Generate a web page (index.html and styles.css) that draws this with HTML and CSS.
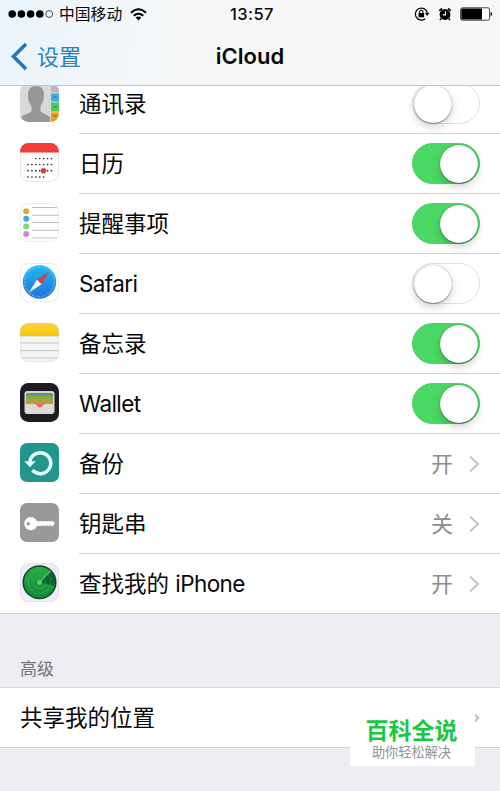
FILE: index.html
```html
<!DOCTYPE html>
<html lang="zh-CN">
<head>
<meta charset="utf-8">
<title>iCloud</title>
<link rel="stylesheet" href="styles.css">
</head>
<body>
<header class="header">
  <div class="status">
    <div class="carrier">
      <svg width="46" height="10" viewBox="0 0 46 10"><circle cx="4.2" cy="5" r="3.8"/><circle cx="13.4" cy="5" r="3.8"/><circle cx="22.6" cy="5" r="3.8"/><circle cx="31.8" cy="5" r="3.8"/><circle cx="41.2" cy="5" r="3.4" fill="none" stroke="#222" stroke-width=".8"/></svg>
      <span>中国移动</span>
      <svg class="wifi" width="17" height="13" viewBox="0 0 17 13"><g fill="none" stroke="#000" stroke-width="2"><path d="M1 4.8Q8.500-2.200 16 4.800"/><path d="M3.700 7.800Q8.500 3.600 13.300 7.800"/></g><path d="M5.600 9.600Q8.500 7.300 11.400 9.600L8.500 12.500Z"/></svg>
    </div>
    <span class="clock">13:57</span>
    <div class="indicators">
      <svg width="16" height="14" viewBox="0 0 16 14"><path d="M13.200 5.500A6 6 0 1 0 11.200 11.700" fill="none" stroke="#000" stroke-width="1.200"/><path d="M10.900 5.800h4.500l-2.200 3.200z"/><path d="M4.500 6h5.600v4.300H4.500z"/><path d="M5.600 6.300V5a1.700 1.700 0 0 1 3.400 0v1.300" fill="none" stroke="#000" stroke-width="1.100"/></svg>
      <svg width="14" height="14" viewBox="0 0 14 14"><circle cx="7" cy="7.500" r="5.400"/><path d="M1.300 3.800 4 1.500M10 1.500l2.700 2.300M3.200 11.700 2 13M10.800 11.700 12 13" stroke="#000" stroke-width="1.700"/><path d="M7.500 4.300v3.600H4.800" fill="none" stroke="#fff" stroke-width="1.100"/></svg>
      <svg width="33" height="14" viewBox="0 0 33 14"><rect x=".6" y=".8" width="29" height="12.400" rx="2" fill="#fff" stroke="#444" stroke-width="1"/><rect x="1.300" y="1.500" width="20.700" height="11"/><path d="M30.700 4.500q2.800 2.500 0 5z"/></svg>
    </div>
  </div>
  <nav class="nav">
    <a class="back"><svg width="18" height="29" viewBox="0 0 18 29"><path d="M16 2 3.500 14.500 16 27" fill="none" stroke="#1b7bc9" stroke-width="3.600"/></svg><span>设置</span></a>
    <h1 class="title">iCloud</h1>
  </nav>
</header>
<main>
  <ul class="list">
    <li class="row">
      <svg class="icon" viewBox="0 0 39 39"><defs><clipPath id="app"><rect width="39" height="39" rx="8.500"/></clipPath></defs><g clip-path="url(#app)"><path fill="#d9d9d9" d="M0 0h39v39H0z"/><path fill="#969696" d="M16 3c5.500 0 8.500 4 8 10-.3 5-2 8-3.500 10v5c2 3 7 3 9.500 6.500V39H1v-4.500C3.500 31 10 31 11.500 28v-5C9 20 8 17 8 13 7.500 7 10.500 3 16 3z"/><path fill="#b8b8b8" d="M31 0h8v10h-8z"/><path fill="#3eafe7" d="M31 10h8v9h-8z"/><path fill="#4bcd58" d="M31 19h8v10h-8z"/><path fill="#f39b18" d="M31 29h8v10h-8z"/><path d="M31 19h8M31 29h8M31 10h8" stroke="#fff" stroke-width=".7"/><path d="M33 14h4M33 24h4M33 33h4" stroke="#47727f" stroke-width="1"/></g></svg>
      <div class="cell"><span class="label">通讯录</span><i class="switch"></i></div>
    </li>
    <li class="row">
      <svg class="icon" viewBox="0 0 39 39"><rect x=".4" y=".4" width="38.200" height="38.200" rx="8.500" fill="#fff" stroke="#e4dede" stroke-width=".8"/><path clip-path="url(#app)" fill="#f23c39" d="M0 0h39v9.500H0z"/><g fill="none" stroke="#333" stroke-width="1.700" stroke-linecap="round" stroke-dasharray=".01 3.900"><path d="M15.800 15.500h16"/><path d="M8 21.500h24"/><path d="M8 27.700h24"/><path d="M8 34h16"/></g><circle cx="23.500" cy="27.700" r="2.800" fill="#dc4444"/></svg>
      <div class="cell"><span class="label">日历</span><i class="switch on"></i></div>
    </li>
    <li class="row">
      <svg class="icon" viewBox="0 0 39 39"><rect x=".4" y=".4" width="38.200" height="38.200" rx="8.500" fill="#fff" stroke="#e6e6e6" stroke-width=".8"/><path d="M12 4.500h25M12 12.300h27M12 19.500h27M12 27.300h27M12 35h25" stroke="#bfbfc3" stroke-width="1"/><circle cx="6.200" cy="8.300" r="3" fill="#dba83f"/><circle cx="6.200" cy="15.700" r="3" fill="#3eabe0"/><circle cx="6.200" cy="23.500" r="3" fill="#7ddc65"/><circle cx="6.200" cy="31" r="3" fill="#ca85df"/></svg>
      <div class="cell"><span class="label">提醒事项</span><i class="switch on"></i></div>
    </li>
    <li class="row">
      <svg class="icon" viewBox="0 0 39 39"><defs><linearGradient id="sea" x2="0" y2="1"><stop stop-color="#20b9ee"/><stop offset="1" stop-color="#2470dc"/></linearGradient></defs><rect x=".4" y=".4" width="38.200" height="38.200" rx="8.500" fill="#fff" stroke="#e5e5e5" stroke-width=".8"/><circle cx="19.500" cy="19" r="16.700" fill="url(#sea)"/><circle cx="19.500" cy="19" r="14.800" fill="none" stroke="#9bdcf8" stroke-width="1.600" stroke-dasharray=".6 1.700"/><path fill="#d83c48" d="M29 8.500 17 16.800l4.500 4.500z"/><path fill="#fff" d="M9 29.500 17 16.800l4.500 4.500z"/></svg>
      <div class="cell"><span class="label"><span class="latin">Safari</span></span><i class="switch"></i></div>
    </li>
    <li class="row">
      <svg class="icon" viewBox="0 0 39 39"><defs><linearGradient id="gold" x2="0" y2="1"><stop stop-color="#fbd33b"/><stop offset="1" stop-color="#fac60c"/></linearGradient></defs><g clip-path="url(#app)"><path fill="#f4f4f4" d="M0 0h39v39H0z"/><path fill="url(#gold)" d="M0 0h39v12.500H0z"/><path d="M0 12.800h39" stroke="#bda65b" stroke-width=".8"/><path d="M0 20h39M0 27.700h39M0 35h39" stroke="#c3c3c3" stroke-width="1"/></g><rect x=".4" y=".4" width="38.200" height="38.200" rx="8.500" fill="none" stroke="#ccc" stroke-opacity=".5" stroke-width=".8"/></svg>
      <div class="cell"><span class="label">备忘录</span><i class="switch on"></i></div>
    </li>
    <li class="row">
      <svg class="icon" viewBox="0 0 39 39"><rect width="39" height="39" rx="8.500" fill="#1d1d20"/><rect x="4.500" y="8" width="30" height="23" rx="3" fill="#d9d7ce"/><rect x="6" y="10" width="27" height="9" rx="1.500" fill="#598fa8"/><rect x="6" y="12.500" width="27" height="8" rx="1.500" fill="#86ad39"/><rect x="6" y="16" width="27" height="5" fill="#a6a43b"/><path fill="#e08360" d="M6 19.500h27v2H6z"/><path fill="#dedbd3" d="M6 21h9c2 0 2 3.500 5 3.500s3-3.500 5-3.500h8v9H6z"/><path fill="#ed6959" d="M14 20.500h12c-3 0-3 4-6 4s-3-4-6-4z"/></svg>
      <div class="cell"><span class="label"><span class="latin">Wallet</span></span><i class="switch on"></i></div>
    </li>
    <li class="row">
      <svg class="icon" viewBox="0 0 39 39"><rect width="39" height="39" rx="7" fill="#22968b"/><path d="M9.900 18.500A10.500 10.500 0 1 1 12.400 27.200" fill="none" stroke="#e9fffa" stroke-width="3.500"/><path fill="#e9fffa" d="M4.300 18.300h11.400l-5.800 6z"/></svg>
      <div class="cell"><span class="label">备份</span><span class="value">开</span><svg class="chevron" viewBox="0 0 11 18"><path d="m1 1.500 8 7.500-8 7.500"/></svg></div>
    </li>
    <li class="row">
      <svg class="icon" viewBox="0 0 39 39"><rect width="39" height="39" rx="7" fill="#999"/><circle cx="10.800" cy="20.700" r="6.600" fill="#fff"/><path fill="#fff" d="M15 18.300h18.300l1.500 2.300-1.800 2.400h-2l-1-1-1 1h-1.500l-1-1-1 1H24l-1-1-1 1h-7z"/><circle cx="8.300" cy="20.700" r="1.700" fill="#999"/></svg>
      <div class="cell"><span class="label">钥匙串</span><span class="value">关</span><svg class="chevron" viewBox="0 0 11 18"><path d="m1 1.500 8 7.500-8 7.500"/></svg></div>
    </li>
    <li class="row">
      <svg class="icon" viewBox="0 0 39 39"><defs><linearGradient id="radar" x2="0" y2="1"><stop stop-color="#26ad48"/><stop offset="1" stop-color="#15883a"/></linearGradient></defs><rect x=".4" y=".4" width="38.200" height="38.200" rx="8.500" fill="#f0edf4" stroke="#ddd3e4" stroke-width=".8"/><circle cx="19.500" cy="19.200" r="16.300" fill="url(#radar)" stroke="#17452a" stroke-width="1.500"/><path fill="#0e6130" d="m19.500 19.200 11-11.200a15.500 15.500 0 0 1 4 15z"/><g fill="none" stroke="#54cf68" stroke-opacity=".4" stroke-width=".8"><circle cx="19.500" cy="19.200" r="11.500"/><circle cx="19.500" cy="19.200" r="6.500"/></g><path d="m19.500 19.200 11-11.200" stroke="#7ae578" stroke-width="1"/><circle cx="19.500" cy="19.200" r="2.500" fill="#51d164"/></svg>
      <div class="cell"><span class="label">查找我的 <span class="latin">iPhone</span></span><span class="value">开</span><svg class="chevron" viewBox="0 0 11 18"><path d="m1 1.500 8 7.500-8 7.500"/></svg></div>
    </li>
  </ul>
  <h2 class="caption">高级</h2>
  <div class="share"><span class="label">共享我的位置</span><svg class="chevron small" viewBox="0 0 11 18"><path d="m1 1.500 8 7.500-8 7.500"/></svg></div>
</main>
<aside class="badge"><strong>百科全说</strong><span>助你轻松解决</span></aside>
</body>
</html>
```
FILE: styles.css
```css
* { box-sizing: border-box; }
body {
  position: relative;
  height: 791px;
  margin: 0;
  overflow: hidden;
  background: #eeedf4;
  color: #080808;
  font-family: Inter, "Noto Sans CJK SC", sans-serif;
}
svg { display: block; flex: none; }
.header {
  position: relative;
  z-index: 1;
  height: 86px;
  border-bottom: 1px solid #c4c6c8;
  background: linear-gradient(100deg, #e9f4fb 0%, #f4f7f9 28%, #f7f7f8 50%);
}
.status {
  display: grid;
  grid-template-columns: 1fr auto 1fr;
  align-items: center;
  height: 28px;
  padding: 0 7px 0 8px;
}
.carrier { display: flex; align-items: center; font-size: 15.800px; line-height: 20px; }
.carrier span { margin-left: 5px; padding-top: 1px; }
.wifi { margin-left: 8px; }
.clock { padding-left: 3px; font-size: 16.500px; font-weight: 500; letter-spacing: .4px; }
.indicators { display: flex; justify-content: flex-end; align-items: center; gap: 8px; }
.nav {
  display: grid;
  grid-template-columns: 1fr auto 1fr;
  align-items: center;
  height: 56px;
  padding: 0 10px;
}
.back { display: flex; align-items: center; gap: 9px; color: #2981bd; font-size: 22px; line-height: 30px; }
.back span { padding-top: 1px; }
.title { margin: 0; font-size: 22px; font-weight: 600; line-height: 30px; }
.list { margin: -12px 0 0; padding: 0; list-style: none; background: #fff; border-bottom: 1px solid #cfced4; }
.row { display: flex; align-items: center; height: 60px; padding-left: 20px; }
.row:last-child { height: 59px; }
.icon { width: 39px; height: 39px; margin: 0 20px 3px 0; }
.row:last-child .icon { margin-bottom: 2px; }
.cell {
  display: flex;
  flex: 1;
  align-items: center;
  align-self: stretch;
  padding-right: 20px;
  border-bottom: 1px solid #d2d2d4;
}
.row:last-child .cell { border-bottom: 0; }
.label { flex: 1; font-size: 22.500px; line-height: 32px; }
.latin { letter-spacing: -.6px; }
.value { margin-right: 16px; color: #8c8c90; font-size: 22px; line-height: 32px; }
.chevron { width: 11px; height: 18px; fill: none; stroke: #c2c2c7; stroke-width: 2; }
.chevron.small { width: 8px; height: 12px; stroke-width: 3; }
.switch {
  display: flex;
  align-items: center;
  width: 68px;
  height: 41px;
  padding: 1px;
  border: 1px solid #dedee0;
  border-radius: 21px;
  background: #fff;
}
.switch::before {
  content: "";
  width: 38px;
  height: 38px;
  border-radius: 50%;
  background: #fff;
  box-shadow: 0 0 1px rgba(0, 0, 0, .5), 0 1px 1px rgba(0, 0, 0, .3), 0 4px 8px rgba(0, 0, 0, .18);
}
.switch.on { justify-content: flex-end; border-color: #4bd763; background: #4bd763; }
.caption { margin: 0; height: 73px; padding: 42px 20px 0; color: #747479; font-size: 17px; font-weight: 400; line-height: 26px; }
.share {
  display: flex;
  align-items: center;
  height: 61px;
  padding: 0 20px;
  border-top: 1px solid #d5d4da;
  border-bottom: 1px solid #d2d1d7;
  background: #fff;
}
.badge {
  position: absolute;
  left: 350px;
  top: 706px;
  display: flex;
  flex-direction: column;
  align-items: center;
  width: 125px;
  height: 60px;
  padding: 11px 2px 0 0;
  background: #fff;
}
.badge strong { color: #18c83f; font-size: 23px; font-weight: 700; line-height: 28px; }
.badge span { color: #939393; font-size: 13.200px; line-height: 15px; }
```
